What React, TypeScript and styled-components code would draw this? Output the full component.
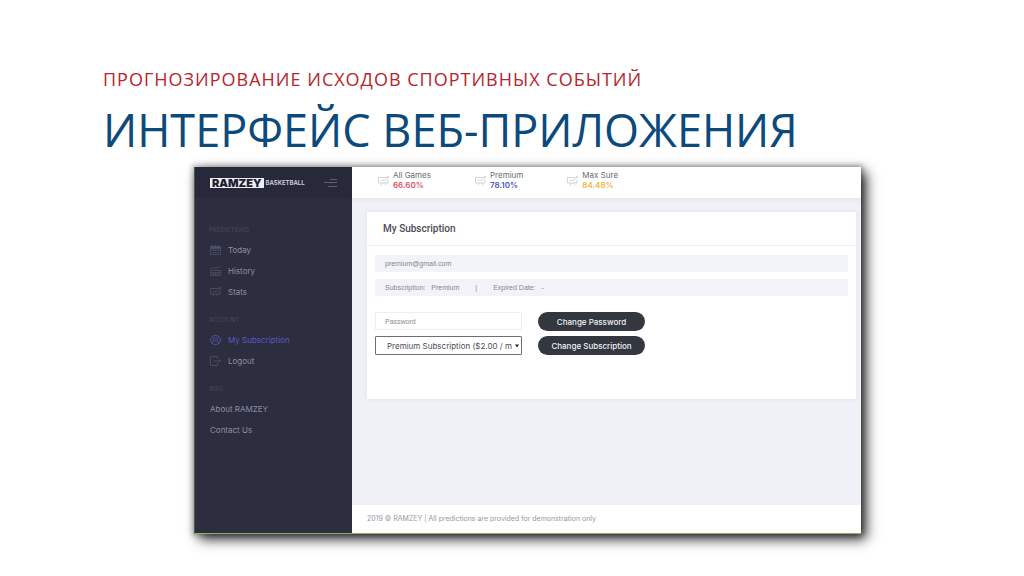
import React from "react";
import styled, { createGlobalStyle } from "styled-components";

const Global = createGlobalStyle`
  *, *::before, *::after { box-sizing: border-box; }
  body { margin: 0; background: #fff; }
`;

const ui = `"Inter", "Liberation Sans", sans-serif`;
const plain = `"Liberation Sans", Arial, sans-serif`;

const Slide = styled.main`
  padding: 66px 163px 40px 103px;
  font-family: "Open Sans", "Noto Sans", sans-serif;
`;

const Kicker = styled.p`
  margin: 0 0 2px;
  font-size: 18px;
  line-height: 26px;
  letter-spacing: 1px;
  color: #b8242c;
  white-space: nowrap;
`;

const Title = styled.h1`
  margin: 0;
  font-size: 45px;
  line-height: 72px;
  font-weight: 400;
  color: #0d4a7c;
  white-space: nowrap;
`;

const Frame = styled.div`
  display: flex;
  margin: 1px 0 0 91px;
  min-height: 367px;
  font-family: ${ui};
  border-left: 1px solid #4d5a45;
  border-bottom: 1px solid #8fae6a;
  box-shadow: 5px 5px 12px rgba(0, 0, 0, 0.85), 0 0 5px 2px rgba(0, 0, 0, 0.25);
`;

const Sidebar = styled.aside`
  flex: 0 0 157px;
  background: #2c2d3e;
`;

const Brand = styled.div`
  display: flex;
  align-items: center;
  height: 31px;
  padding: 0 14px 0 15px;
  background: #272839;
`;

const BrandBox = styled.span`
  padding: 0 2px;
  background: #eceef4;
  color: #1f2030;
  font-size: 11px;
  line-height: 10px;
  font-weight: 900;
`;

const BrandSub = styled.span`
  margin-left: 2px;
  color: #d4d6e2;
  font-size: 6px;
  line-height: 10px;
  font-weight: 600;
`;

const MenuButton = styled.button`
  display: flex;
  margin-left: auto;
  padding: 0;
  border: 0;
  background: none;
  color: #5c5e78;
`;

const Nav = styled.nav`
  padding-top: 22px;
`;

const NavGroup = styled.section`
  display: flex;
  flex-direction: column;
  gap: 1px;
  margin-bottom: 8px;
`;

const NavLabel = styled.h2`
  margin: 0 0 -1px;
  padding-left: 14px;
  font-size: 6px;
  line-height: 20px;
  font-weight: 400;
  color: #474960;
`;

const NavLink = styled.a<{ $active?: boolean }>`
  display: flex;
  align-items: center;
  gap: 7px;
  height: 20px;
  padding-left: 15px;
  font-size: 8px;
  text-decoration: none;
  color: ${(p) => (p.$active ? "#5f57c4" : "#8c8ea6")};

  svg { color: ${(p) => (p.$active ? "#5f57c4" : "#4e506c")}; }
`;

const Main = styled.div`
  display: flex;
  flex: 1;
  flex-direction: column;
  min-width: 0;
  background: #f0f1f7;
`;

const TopBar = styled.header`
  display: flex;
  gap: 44px;
  height: 31px;
  padding: 3px 26px 0;
  background: #fff;
  box-shadow: 0 1px 4px rgba(80, 80, 140, 0.1);
`;

const Stat = styled.div`
  display: flex;
  gap: 4px;
  color: #c9cacf;

  svg { margin-top: 6px; }
`;

const StatText = styled.div`
  display: flex;
  flex-direction: column;
  font-size: 8px;
  line-height: 10px;
  color: #6c6d75;
`;

const StatValue = styled.strong<{ $color: string }>`
  font-weight: 600;
  color: ${(p) => p.$color};
`;

const Card = styled.section`
  margin: 14px 5px 0 15px;
  min-height: 187px;
  background: #fff;
  box-shadow: 0 0 4px rgba(80, 80, 140, 0.1);
`;

const CardTitle = styled.h2`
  margin: 0;
  padding: 0 16px;
  border-bottom: 1px solid #ededf3;
  font-family: Roboto, sans-serif;
  font-size: 10px;
  line-height: 33px;
  font-weight: 500;
  color: #4a4b53;
`;

const CardBody = styled.form`
  display: flex;
  flex-direction: column;
  padding: 9px 8px;
`;

const InfoRow = styled.div`
  display: flex;
  height: 17px;
  margin-bottom: 7px;
  padding: 0 10px;
  background: #f2f3f8;
  font-family: ${plain};
  font-size: 7px;
  line-height: 17px;
  color: #85868e;
  white-space: pre;
`;

const Separator = styled.span`
  margin: 0 16px;
`;

const Fields = styled.div`
  display: grid;
  grid-template-columns: 147px 107px;
  gap: 5px 16px;
  margin-top: 9px;
`;

const PasswordInput = styled.input`
  width: 100%;
  height: 18px;
  padding: 0 9px;
  border: 1px solid #efeff3;
  background: #fff;
  font-family: ${plain};
  font-size: 7px;
  color: #8b8c93;

  &::placeholder { color: #8b8c93; opacity: 1; }
`;

const SelectWrap = styled.div`
  position: relative;
`;

const Select = styled.select`
  display: block;
  width: 100%;
  height: 19px;
  padding: 0 8px 0 11px;
  border: 1px solid #6e6f74;
  border-radius: 1px;
  background: #fff;
  appearance: none;
  font-family: ${ui};
  font-size: 8px;
  color: #4c4d55;
`;

const Caret = styled.svg`
  position: absolute;
  top: 8px;
  right: 3px;
  pointer-events: none;
`;

const PillButton = styled.button`
  height: 19px;
  padding: 0;
  border: 0;
  border-radius: 10px;
  background: #33373f;
  color: #f1f1f3;
  font-family: ${ui};
  font-size: 8px;
  font-weight: 500;
  white-space: nowrap;
`;

const Footer = styled.footer`
  margin-top: auto;
  padding: 0 15px;
  background: #fff;
  font-size: 7px;
  line-height: 28px;
  color: #96979f;
`;

const line = { fill: "none", stroke: "currentColor", strokeWidth: 0.8 };

const CalendarIcon = () => (
  <svg width="11" height="10" viewBox="0 0 11 10" {...line}>
    <path d="M.5 1.5h10v8H.5zM.5 4h10M2.5 0v2M5.5 0v2M8.500 0v2" />
    <path d="M1 2.700h9" strokeWidth="2" />
    <path d="M2.500 5.500h1.500M5 5.500h1.500M7.500 5.500h1.500M2.500 7.500h1.500M5 7.500h1.500M7.500 7.500h1.500" strokeWidth="1" />
  </svg>
);

const HistoryIcon = () => (
  <svg width="11" height="10" viewBox="0 0 11 10" {...line}>
    <path d="M.5 4.500h10v5H.5zM.5 3l3-1.500 2 1L10 .5M3 6v3.500M5.500 6v3.500M8 6v3.500M1 7h9" />
  </svg>
);

const BoardIcon = () => (
  <svg width="11" height="10" viewBox="0 0 11 10" {...line}>
    <path d="M8.500 1.500H.5v5.500h9.500V3.500M3 9.500l1-2.500M8 9.500l-1-2.500M2.500 5l2-1 1.500.8L10.500.8M8.800.7h1.800v1.500" />
  </svg>
);

const UserIcon = () => (
  <svg width="11" height="10" viewBox="0 0 11 10" {...line}>
    <ellipse cx="5.500" cy="5" rx="5" ry="4.500" />
    <path d="M2.300 7.800C2.300 6.300 3 6.100 3.700 5.700L3.500 3.300C4 2.300 5 2.300 5.500 3.400 6 2.300 7 2.300 7.500 3.300L7.300 5.700C8 6.100 8.700 6.300 8.700 7.800M4.300 6.300l1.200-1 1.200 1" />
  </svg>
);

const LogoutIcon = () => (
  <svg width="11" height="10" viewBox="0 0 11 10" {...line}>
    <path d="M7.500 3V.5h-7v9h7V7M4 5h6.500M9 3.500L10.500 5 9 6.500" />
  </svg>
);

const MenuIcon = () => (
  <svg width="14" height="8" viewBox="0 0 14 8" fill="none" stroke="currentColor">
    <path d="M6 .5h7M0 3.500h13M4 7.500h9" />
  </svg>
);

const stats = [
  { label: "All Games", value: "66.60%", color: "#e0506c" },
  { label: "Premium", value: "78.10%", color: "#5359bf" },
  { label: "Max Sure", value: "84.48%", color: "#efb73e" },
];

export default function App() {
  return (
    <>
      <Global />
      <Slide>
        <Kicker>ПРОГНОЗИРОВАНИЕ ИСХОДОВ СПОРТИВНЫХ СОБЫТИЙ</Kicker>
        <Title>ИНТЕРФЕЙС ВЕБ-ПРИЛОЖЕНИЯ</Title>
        <Frame>
          <Sidebar>
            <Brand>
              <BrandBox>RAMZEY</BrandBox>
              <BrandSub>BASKETBALL</BrandSub>
              <MenuButton type="button" aria-label="Menu"><MenuIcon /></MenuButton>
            </Brand>
            <Nav>
              <NavGroup>
                <NavLabel>PREDICTIONS</NavLabel>
                <NavLink href="#today"><CalendarIcon />Today</NavLink>
                <NavLink href="#history"><HistoryIcon />History</NavLink>
                <NavLink href="#stats"><BoardIcon />Stats</NavLink>
              </NavGroup>
              <NavGroup>
                <NavLabel>ACCOUNT</NavLabel>
                <NavLink href="#subscription" $active><UserIcon />My Subscription</NavLink>
                <NavLink href="#logout"><LogoutIcon />Logout</NavLink>
              </NavGroup>
              <NavGroup>
                <NavLabel>INFO</NavLabel>
                <NavLink href="#about">About RAMZEY</NavLink>
                <NavLink href="#contact">Contact Us</NavLink>
              </NavGroup>
            </Nav>
          </Sidebar>
          <Main>
            <TopBar>
              {stats.map((s) => (
                <Stat key={s.label}>
                  <BoardIcon />
                  <StatText>
                    <span>{s.label}</span>
                    <StatValue $color={s.color}>{s.value}</StatValue>
                  </StatText>
                </Stat>
              ))}
            </TopBar>
            <Card>
              <CardTitle>My Subscription</CardTitle>
              <CardBody>
                <InfoRow>premium@gmail.com</InfoRow>
                <InfoRow>
                  <span>Subscription:   Premium</span>
                  <Separator>|</Separator>
                  <span>Expired Date:   -</span>
                </InfoRow>
                <Fields>
                  <PasswordInput type="password" placeholder="Password" aria-label="Password" />
                  <PillButton type="button">Change Password</PillButton>
                  <SelectWrap>
                    <Select aria-label="Subscription plan">
                      <option>Premium Subscription ($2.00 / m</option>
                    </Select>
                    <Caret width="4" height="4" viewBox="0 0 4 4"><path d="M0 .5h4L2 3.500z" fill="#222" /></Caret>
                  </SelectWrap>
                  <PillButton type="button">Change Subscription</PillButton>
                </Fields>
              </CardBody>
            </Card>
            <Footer>2019 © RAMZEY | All predictions are provided for demonstration only</Footer>
          </Main>
        </Frame>
      </Slide>
    </>
  );
}
